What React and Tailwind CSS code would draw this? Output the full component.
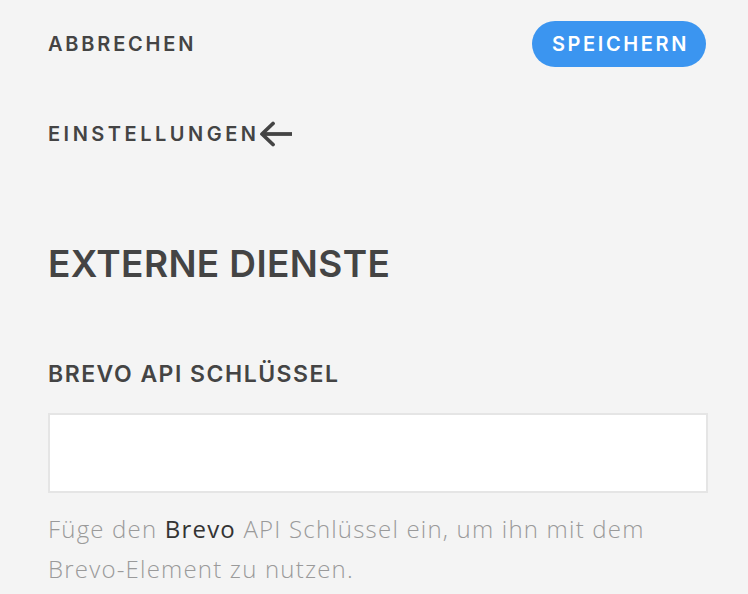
import React from 'react';

const head = { fontFamily: 'Inter, "Noto Sans", sans-serif' };

export default function App() {
  return (
    <div className="min-h-[594px] w-full bg-[#f4f4f4] text-[#444444]">
      {/* top bar */}
      <div className="flex items-center justify-between pl-[48px] pr-[42px] pt-[21px]">
        <button style={head} className="text-[20px] font-semibold tracking-[0.14em] leading-none">
          ABBRECHEN
        </button>
        <button
          style={head}
          className="h-[46px] w-[174px] rounded-full bg-[#3b95f0] pl-[3px] text-[20px] font-semibold tracking-[0.13em] text-white"
        >
          SPEICHERN
        </button>
      </div>

      <div className="px-[48px]">
        {/* back link */}
        <div className="mt-[54px] flex items-center" style={head}>
          <span className="text-[20px] font-semibold tracking-[0.175em] leading-none">EINSTELLUNGEN</span>
          <svg width="34" height="26" viewBox="0 0 34 26" fill="none" stroke="#444444" strokeWidth="3.8">
            <path d="M4 13H33" />
            <path d="M14 2.5L3 13l11 10.5" strokeLinecap="round" strokeLinejoin="round" />
          </svg>
        </div>

        <h1 style={head} className="mt-[98px] text-[37px] font-semibold tracking-[0.01em] leading-none">
          EXTERNE DIENSTE
        </h1>

        <label style={head} className="mt-[81px] block text-[23px] font-semibold tracking-[0.065em] leading-none">
          BREVO API SCHLÜSSEL
        </label>

        <input
          type="text"
          className="mt-[27px] block h-[80px] w-[660px] border-2 border-[#e5e5e5] bg-white outline-none"
        />

        <p
          style={{ fontFamily: '"Open Sans", sans-serif' }}
          className="mt-[16px] w-[640px] text-[24px] font-light leading-[40px] tracking-[0.05em] text-[#9a9a9a]"
        >
          Füge den <span className="font-normal text-[#333333]">Brevo</span> API Schlüssel ein, um ihn mit dem Brevo-Element zu nutzen.
        </p>
      </div>
    </div>
  );
}
